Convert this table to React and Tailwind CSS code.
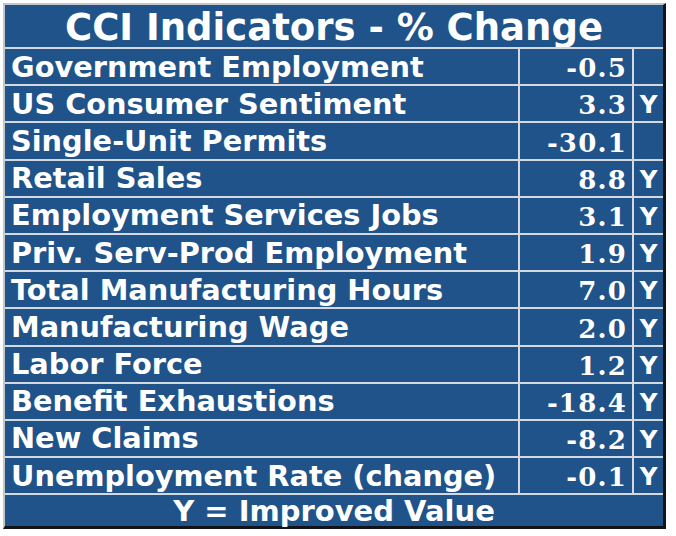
import React from "react";

const rows = [
  ["Government Employment", "-0.5", ""],
  ["US Consumer Sentiment", "3.3", "Y"],
  ["Single-Unit Permits", "-30.1", ""],
  ["Retail Sales", "8.8", "Y"],
  ["Employment Services Jobs", "3.1", "Y"],
  ["Priv. Serv-Prod Employment", "1.9", "Y"],
  ["Total Manufacturing Hours", "7.0", "Y"],
  ["Manufacturing Wage", "2.0", "Y"],
  ["Labor Force", "1.2", "Y"],
  ["Benefit Exhaustions", "-18.4", "Y"],
  ["New Claims", "-8.2", "Y"],
  ["Unemployment Rate (change)", "-0.1", "Y"],
];

export default function App() {
  return (
    <div className="w-[676px] h-[536px] bg-white pl-[3px] pt-[3px]">
      <div
        className="w-[663px] h-[526px] flex flex-col bg-[#1f5389] border-l-2 border-t-2 border-l-[#c3c7cc] border-t-[#c3c7cc] border-r-[3px] border-b-[3px] border-r-[#101418] border-b-[#101418] text-white font-bold"
        style={{ fontFamily: '"DejaVu Sans", Verdana, sans-serif' }}
      >
        <div className="h-[42px] shrink-0 flex items-end justify-center text-[37px] leading-none pb-[1px]">
          CCI Indicators - % Change
        </div>
        {rows.map(([label, value, flag]) => (
          <div
            key={label}
            className="h-[37.2px] shrink-0 grid grid-cols-[513px_112px_1fr] gap-x-[2px] bg-[#d3d9e1] border-t-2 border-[#d3d9e1] leading-none"
          >
            <div className="bg-[#1f5389] flex items-end pl-[6px] pb-[2.8px] whitespace-nowrap text-[28.8px]">
              {label}
            </div>
            <div
              className="bg-[#1f5389] flex items-end justify-end pr-[5px] pb-[3px] text-[26px] tracking-[1.2px]"
              style={{ fontFamily: '"DejaVu Serif", "Liberation Serif", serif' }}
            >
              {value}
            </div>
            <div className="bg-[#1f5389] flex items-end justify-center pb-[3.4px] text-[24.5px]">
              {flag}
            </div>
          </div>
        ))}
        <div className="flex-1 border-t-2 border-[#d3d9e1] flex items-end justify-center text-[29px] leading-none pb-[0.5px]">
          Y = Improved Value
        </div>
      </div>
    </div>
  );
}
